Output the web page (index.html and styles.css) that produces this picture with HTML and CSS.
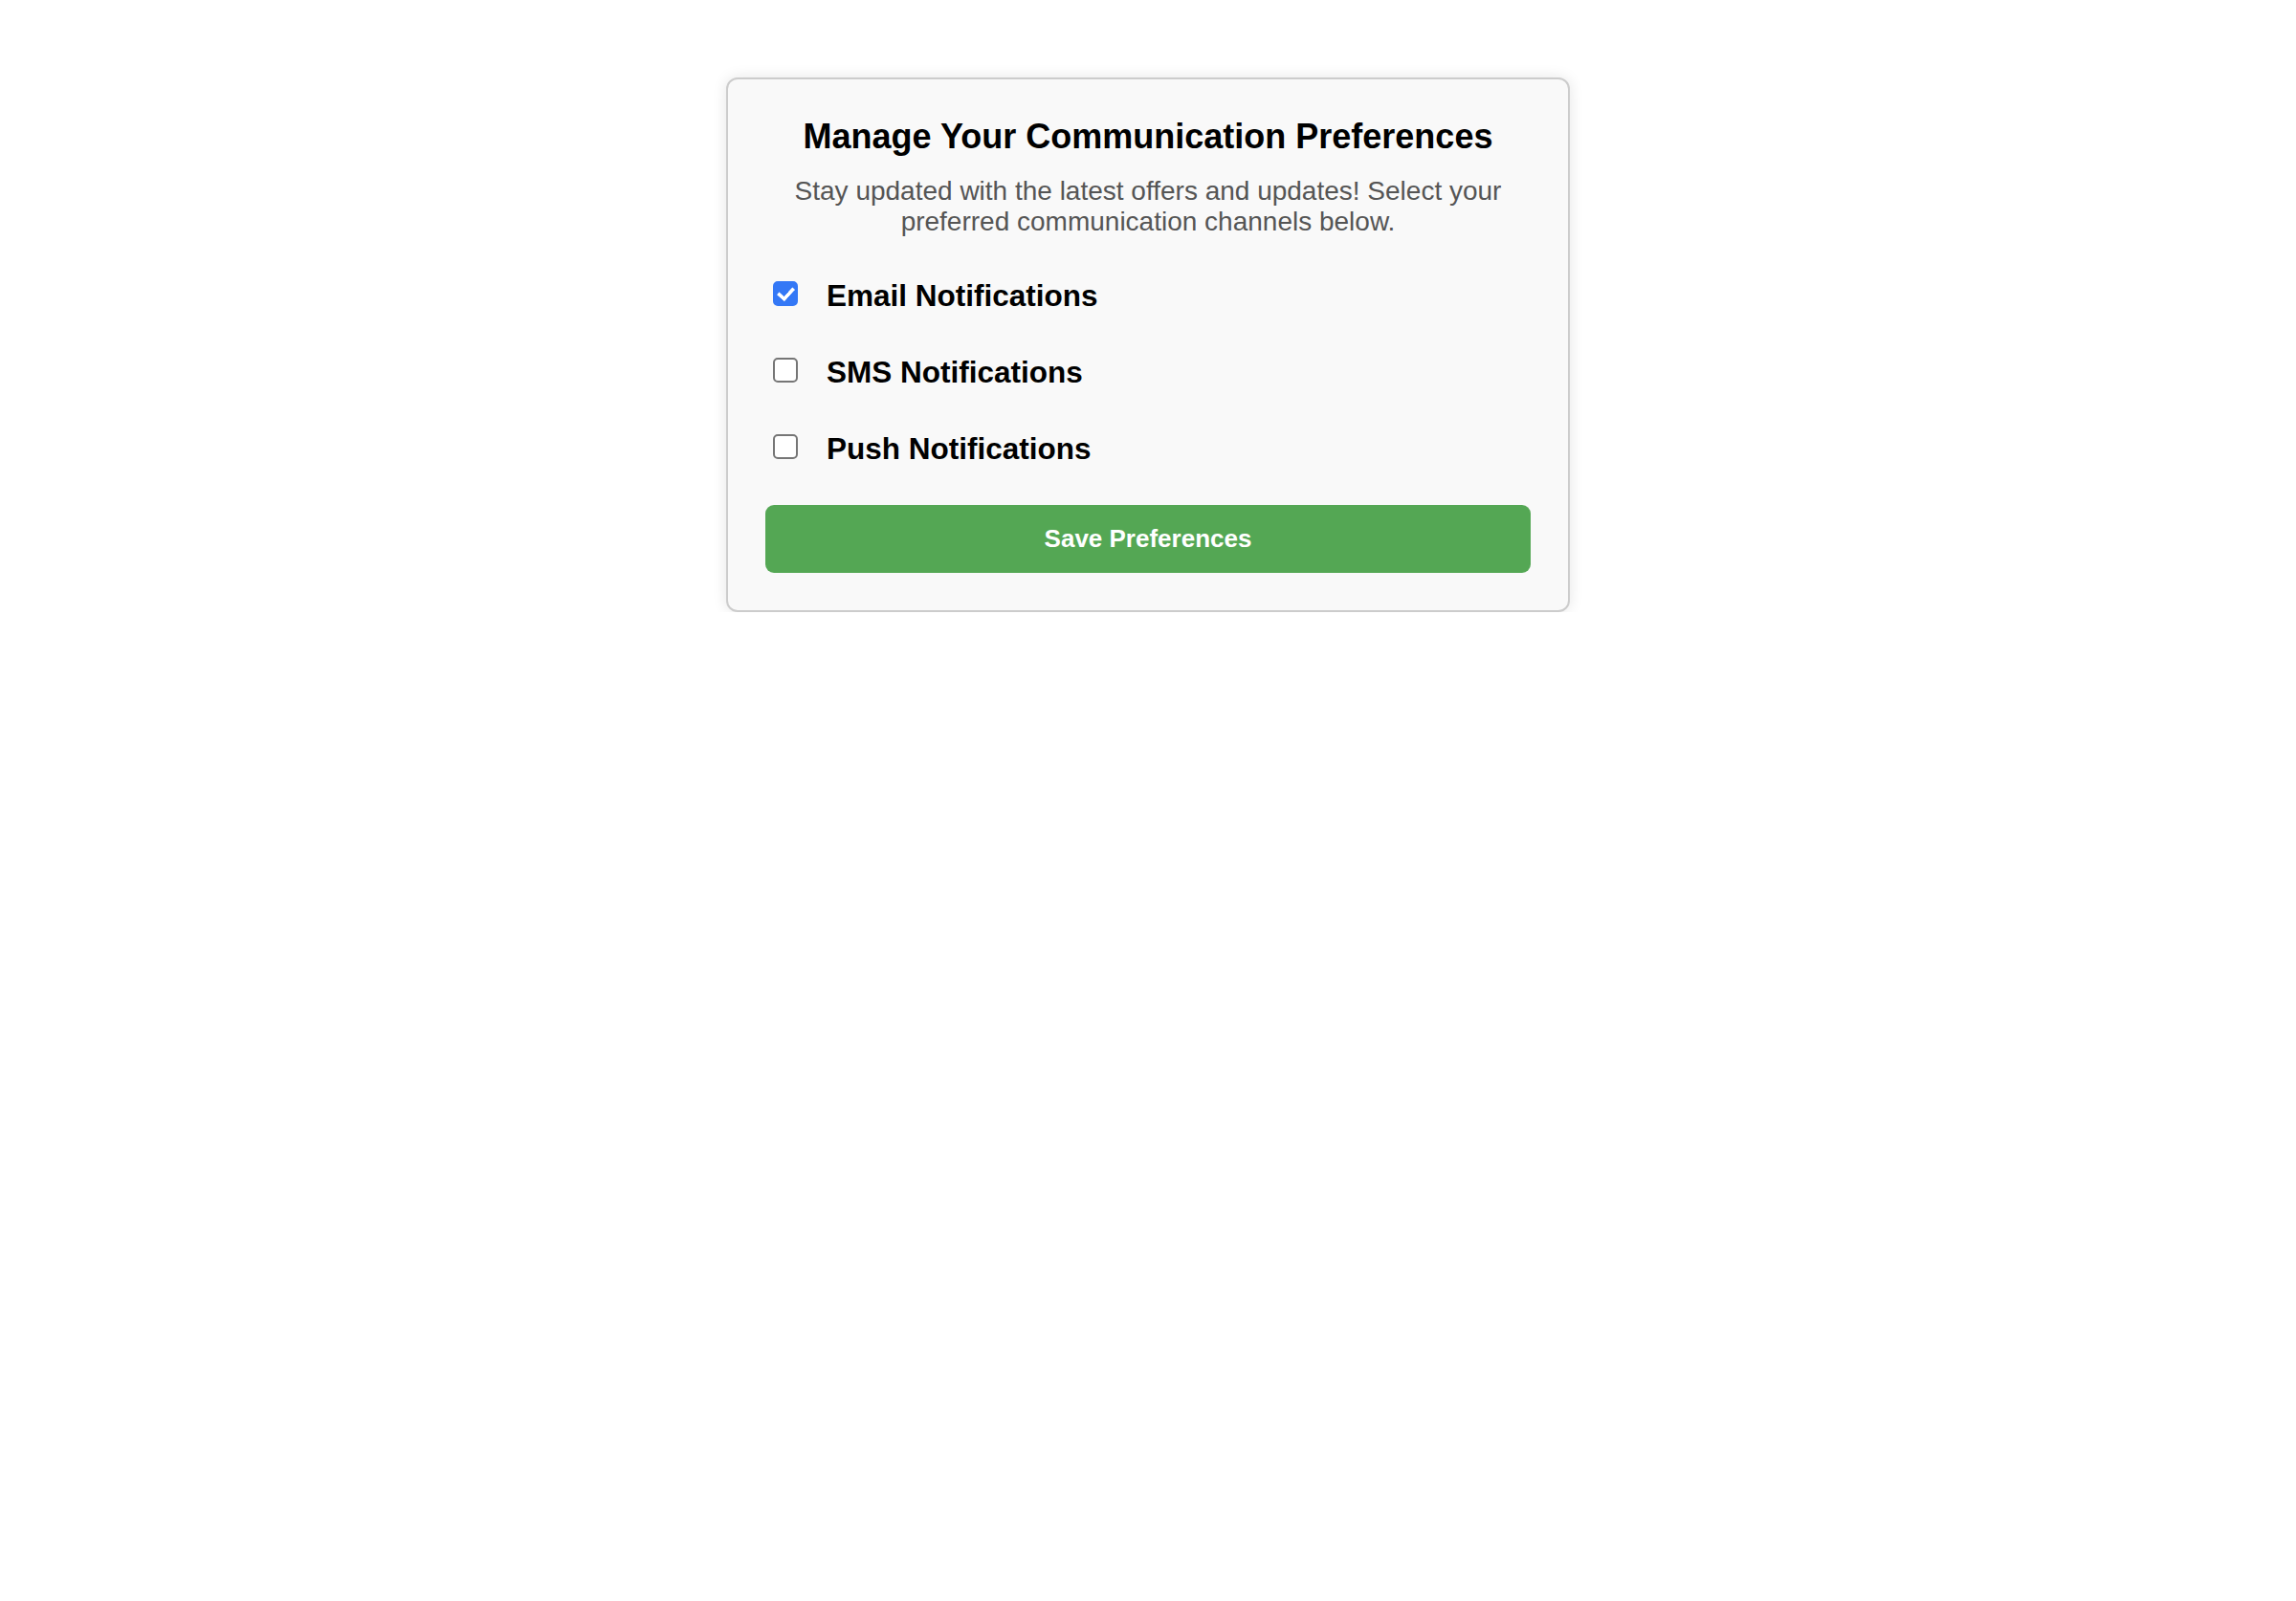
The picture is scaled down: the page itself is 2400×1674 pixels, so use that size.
FILE: index.html
```html
<!DOCTYPE html>
<html lang="en">
<head>
<meta charset="utf-8">
<title>Communication Preferences</title>
<link rel="stylesheet" href="styles.css">
</head>
<body>
<main class="page">
  <section class="card">
    <h1 class="title">Manage Your Communication Preferences</h1>
    <p class="subtitle">Stay updated with the latest offers and updates! Select your preferred communication channels below.</p>
    <div class="options">
      <label class="option"><input type="checkbox" class="check" checked><span>Email Notifications</span></label>
      <label class="option"><input type="checkbox" class="check"><span>SMS Notifications</span></label>
      <label class="option"><input type="checkbox" class="check"><span>Push Notifications</span></label>
    </div>
    <button class="save" type="button">Save Preferences</button>
  </section>
</main>
</body>
</html>
```

FILE: styles.css
```css
html, body {
  margin: 0;
  padding: 0;
  background: #ffffff;
}

body {
  font-family: "Liberation Sans", Arial, sans-serif;
  color: #000;
}

.page {
  padding-top: 81px;
}

.card {
  box-sizing: border-box;
  width: 882px;
  margin: 0 auto;
  padding: 39px 39px 39px;
  background: #f9f9f9;
  border: 2px solid #cccccc;
  border-radius: 12px;
  box-shadow: 0 0 15px rgba(0, 0, 0, 0.1);
}

.title {
  margin: 0 0 21px;
  font-size: 36px;
  line-height: 41px;
  font-weight: bold;
  text-align: center;
  color: #000;
}

.subtitle {
  margin: 0 0 21px;
  font-size: 28px;
  line-height: 32px;
  color: #555555;
  text-align: center;
}

.options {
  display: flex;
  flex-direction: column;
}

.option {
  display: flex;
  align-items: center;
  height: 80px;
  font-size: 31.5px;
  line-height: 36px;
  font-weight: bold;
  cursor: pointer;
}

.check {
  appearance: none;
  -webkit-appearance: none;
  position: relative;
  box-sizing: border-box;
  width: 26px;
  height: 26px;
  margin: 0 30px 4px 8px;
  border: 2px solid #767676;
  border-radius: 5px;
  background: #ffffff;
  flex: none;
}

.check:checked {
  background: #3478f6;
  border-color: #3478f6;
}

.check:checked::after {
  content: "";
  position: absolute;
  left: 6px;
  top: 1px;
  width: 7px;
  height: 13px;
  border: solid #ffffff;
  border-width: 0 4px 4px 0;
  border-radius: 1px;
  transform: rotate(42deg);
}

.save {
  display: flex;
  align-items: center;
  justify-content: center;
  width: 100%;
  height: 71px;
  margin-top: 19px;
  padding: 0;
  border: none;
  border-radius: 9px;
  background: #54a754;
  color: #ffffff;
  font-family: "Liberation Sans", Arial, sans-serif;
  font-size: 26px;
  font-weight: bold;
  cursor: pointer;
}
```
